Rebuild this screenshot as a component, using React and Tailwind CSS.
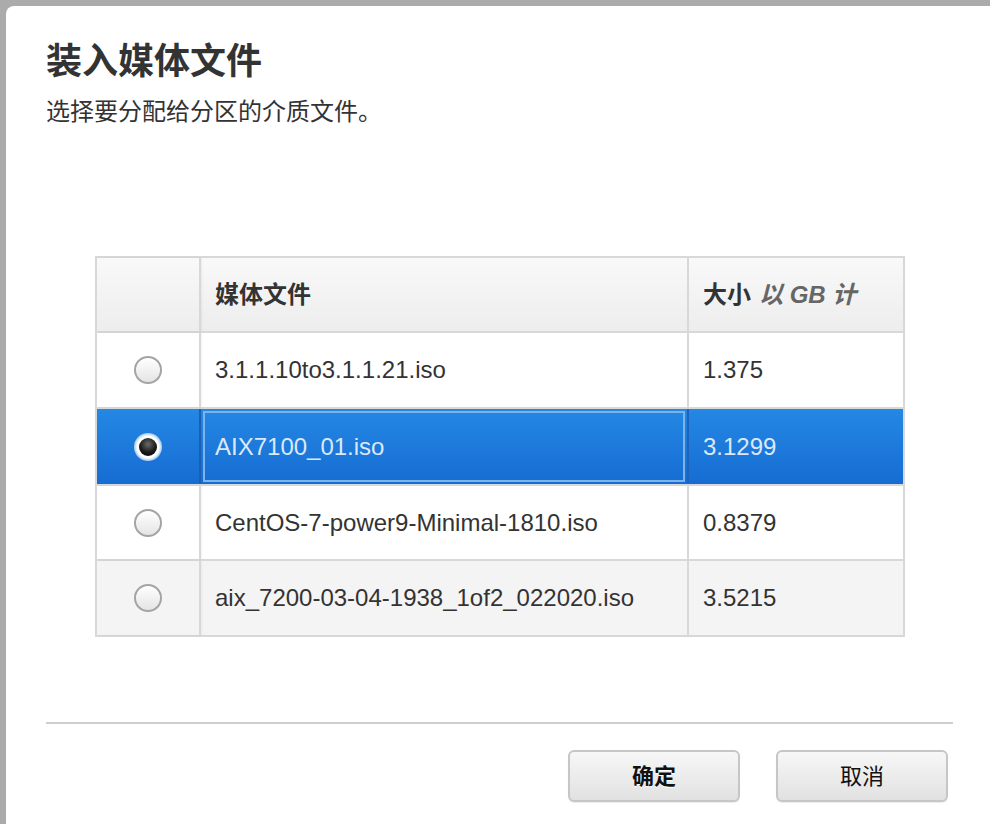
import React from "react";

const rows = [
  { name: "3.1.1.10to3.1.1.21.iso", size: "1.375", bg: "bg-white", h: "h-[76px]" },
  { name: "AIX7100_01.iso", size: "3.1299", selected: true },
  { name: "CentOS-7-power9-Minimal-1810.iso", size: "0.8379", bg: "bg-white", h: "h-[75px]" },
  { name: "aix_7200-03-04-1938_1of2_022020.iso", size: "3.5215", bg: "bg-[#f4f4f4]", h: "h-[74px]" },
];

function Radio({ checked }) {
  if (checked) {
    return (
      <div className="w-[28px] h-[28px] rounded-full bg-[radial-gradient(circle,#ffffff_55%,rgba(255,255,255,0.6)_70%,rgba(255,255,255,0)_100%)] flex items-center justify-center">
        <div className="w-[18px] h-[18px] rounded-full bg-[radial-gradient(circle_at_50%_35%,#6a6a6a_0%,#1a1a1a_55%,#000_100%)]" />
      </div>
    );
  }
  return (
    <div className="w-[28px] h-[28px] rounded-full border-[2px] border-[#a4a4a4] bg-[linear-gradient(to_bottom,#ffffff,#e4e4e4)] shadow-[inset_0_1px_1px_rgba(255,255,255,0.9)]" />
  );
}

export default function App() {
  return (
    <div
      className="w-[990px] h-[824px] bg-[#ababab] pt-[6px] pl-[6px] overflow-hidden"
      style={{ fontFamily: '"Liberation Sans", "Noto Sans CJK SC", sans-serif' }}
    >
      <div className="h-full bg-white rounded-tl-[8px] flex flex-col">
        <div className="pl-[40px] pt-[38px]">
          <h1 className="text-[36px] leading-[36px] font-bold text-[#333]">装入媒体文件</h1>
          <p className="mt-[20px] text-[24px] leading-[24px] text-[#333]">选择要分配给分区的介质文件。</p>
        </div>

        <div className="ml-[89px] mt-[132px] w-[810px] border-[2px] border-[#d8d8d8]">
          {/* header */}
          <div className="flex h-[75px] bg-[linear-gradient(to_bottom,#f9f9f9,#ededed)] border-b-[2px] border-[#d8d8d8]">
            <div className="w-[104px] border-r-[2px] border-[#d8d8d8] shadow-[1px_0_2px_rgba(0,0,0,0.06)]" />
            <div className="w-[488px] border-r-[2px] border-[#d8d8d8] flex items-center pl-[14px] text-[24px] font-bold text-[#333]">
              媒体文件
            </div>
            <div className="flex-1 flex items-center pl-[14px] text-[24px] font-bold text-[#333]">
              大小<span className="ml-[8px] italic text-[#666]">以 GB 计</span>
            </div>
          </div>
          {rows.map((r, i) => {
            const last = i === rows.length - 1;
            if (r.selected) {
              return (
                <div
                  key={i}
                  className="flex h-[77px] bg-[linear-gradient(to_bottom,#2488e4,#166cd2)] border-b-[2px] border-[#d8d8d8]"
                >
                  <div className="w-[104px] border-r-[2px] border-[#1a5fb4] flex items-center justify-center">
                    <Radio checked />
                  </div>
                  <div className="w-[488px] p-[2px] border-r-[2px] border-[#1b63bd]">
                    <div className="h-full border-[2px] border-[#7fb3ec] flex items-center pl-[10px] text-[24px] text-[#dbe8f8]">
                      {r.name}
                    </div>
                  </div>
                  <div className="flex-1 flex items-center pl-[14px] text-[24px] text-[#dbe8f8]">{r.size}</div>
                </div>
              );
            }
            return (
              <div
                key={i}
                className={`flex ${r.h} ${r.bg} ${last ? "" : "border-b-[2px] border-[#d8d8d8]"}`}
              >
                <div className="w-[104px] border-r-[2px] border-[#d8d8d8] shadow-[1px_0_2px_rgba(0,0,0,0.05)] flex items-center justify-center">
                  <Radio />
                </div>
                <div className="w-[488px] border-r-[2px] border-[#d8d8d8] flex items-center pl-[14px] text-[24px] text-[#333]">
                  {r.name}
                </div>
                <div className="flex-1 flex items-center pl-[14px] text-[24px] text-[#333]">{r.size}</div>
              </div>
            );
          })}
        </div>

        <div className="ml-[40px] mr-[37px] mt-[85px] h-[2px] bg-[#cfcfcf]" />

        <div className="flex justify-end gap-[36px] mr-[42px] mt-[26px]">
          <button className="w-[172px] h-[52px] rounded-[6px] border-[2px] border-[#c6c6c6] bg-[linear-gradient(to_bottom,#f7f7f7,#e1e1e1)] text-[22px] font-bold text-[#111] [text-shadow:0_1px_0_#fff] shadow-[0_1px_1px_rgba(0,0,0,0.08)]">
            确定
          </button>
          <button className="w-[172px] h-[52px] rounded-[6px] border-[2px] border-[#c6c6c6] bg-[linear-gradient(to_bottom,#f7f7f7,#e1e1e1)] text-[22px] font-normal text-[#111] shadow-[0_1px_1px_rgba(0,0,0,0.08)]">
            取消
          </button>
        </div>
      </div>
    </div>
  );
}
